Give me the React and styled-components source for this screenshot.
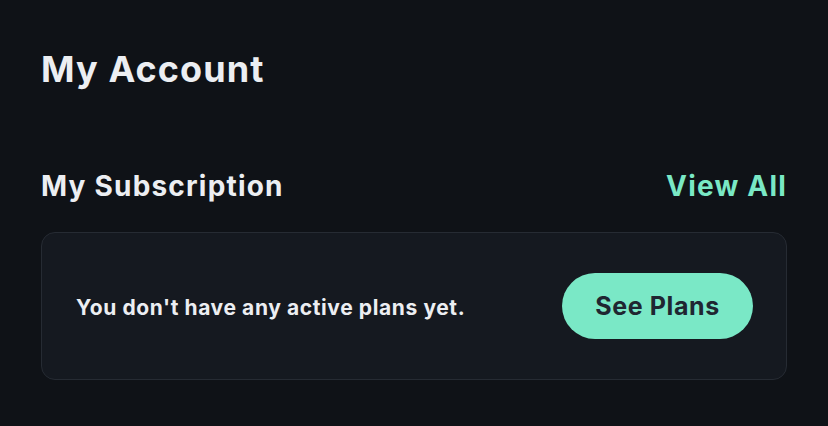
import React from 'react';
import styled, { createGlobalStyle } from 'styled-components';

const GlobalStyle = createGlobalStyle`
  html, body {
    margin: 0;
    padding: 0;
    background: #0f1217;
  }
  body {
    font-family: Inter, Lato, sans-serif;
    -webkit-font-smoothing: antialiased;
  }
`;

const Page = styled.main`
  width: 828px;
  height: 426px;
  box-sizing: border-box;
  padding: 43px 41px 0 41px;
  background: #0f1217;
  color: #eceef2;
`;

const Title = styled.h1`
  margin: 0;
  font-size: 36px;
  line-height: 52px;
  font-weight: 700;
  letter-spacing: 1.1px;
`;

const SectionHeader = styled.div`
  display: flex;
  align-items: center;
  justify-content: space-between;
  margin-top: 71px;
`;

const SectionTitle = styled.h2`
  margin: 0;
  font-size: 28px;
  line-height: 40px;
  font-weight: 700;
  letter-spacing: 1.2px;
`;

const LinkButton = styled.a`
  font-size: 28px;
  line-height: 40px;
  font-weight: 700;
  letter-spacing: 1.2px;
  color: #7ae8c5;
  text-decoration: none;
  cursor: pointer;
`;

const Card = styled.section`
  margin-top: 26px;
  height: 148px;
  box-sizing: border-box;
  display: flex;
  align-items: center;
  justify-content: space-between;
  padding: 0 33px 0 34px;
  background: #151920;
  border: 1.5px solid #262b33;
  border-radius: 14px;
`;

const Message = styled.p`
  margin: 2px 0 0;
  font-size: 21px;
  font-weight: 700;
  letter-spacing: 0.6px;
  color: #eceef2;
`;

const PrimaryButton = styled.button`
  width: 191px;
  height: 66px;
  border: none;
  border-radius: 33px;
  background: #7ae8c6;
  color: #1f2631;
  font-family: inherit;
  font-size: 25px;
  font-weight: 700;
  letter-spacing: 0.6px;
  cursor: pointer;
`;

const App = () => (
  <>
    <GlobalStyle />
    <Page>
      <Title>My Account</Title>
      <SectionHeader>
        <SectionTitle>My Subscription</SectionTitle>
        <LinkButton>View All</LinkButton>
      </SectionHeader>
      <Card>
        <Message>You don&apos;t have any active plans yet.</Message>
        <PrimaryButton type="button">See Plans</PrimaryButton>
      </Card>
    </Page>
  </>
);

export default App;
